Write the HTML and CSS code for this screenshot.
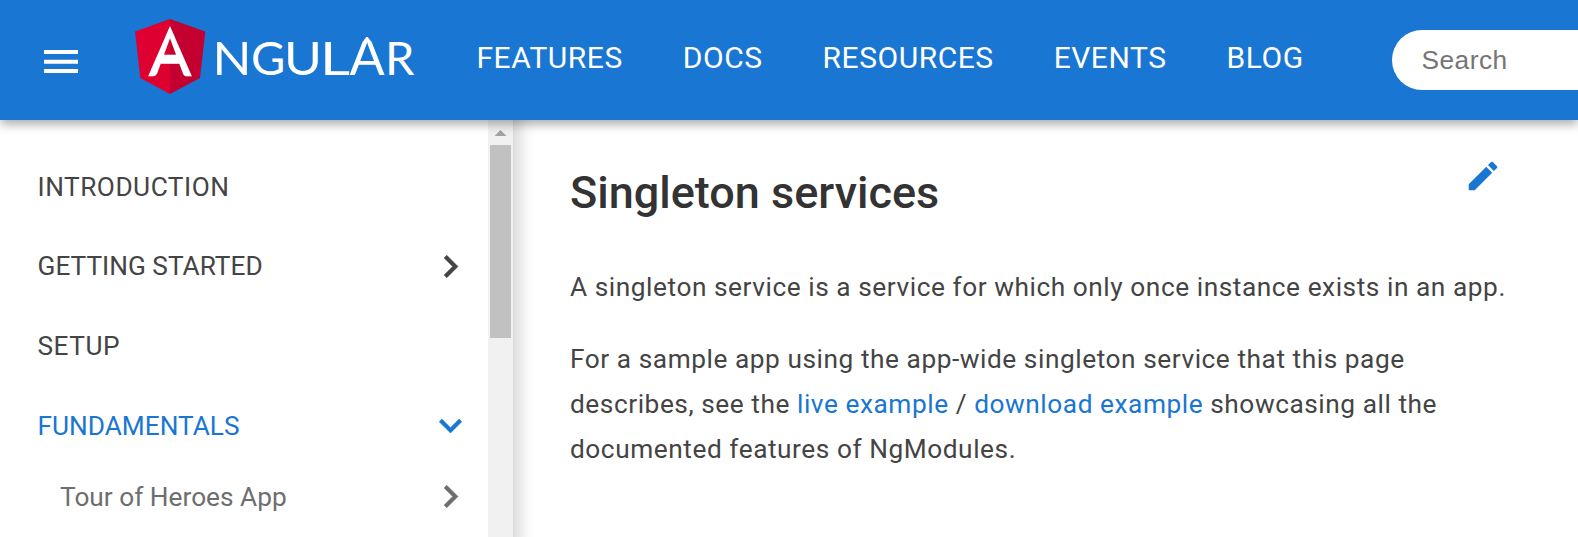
FILE: index.html
```html
<!DOCTYPE html>
<html lang="en">
<head>
<meta charset="utf-8">
<title>Angular - Singleton services</title>
<link rel="stylesheet" href="styles.css">
</head>
<body>
<header class="toolbar">
  <button class="menu-button" aria-label="Docs menu">
    <svg class="menu-icon" viewBox="0 0 34 24"><path d="M0 0h34v4H0zM0 9.8h34v4H0zM0 19h34v4H0z"/></svg>
  </button>
  <a class="logo" aria-label="Angular">
    <svg width="284" height="80" viewBox="0 0 284 80">
      <path class="shield-left" d="M35 2L0 14.500l5.300 46.500L35 77z"/>
      <path class="shield-right" d="M35 2l35.300 12.500L65 61 35 77z"/>
      <text class="mark" x="11" y="57.700" textLength="48" lengthAdjust="spacingAndGlyphs">A</text>
      <path class="shield-left" d="M35 9L12.800 60H8L24 7 35 4z"/>
      <path class="shield-right" d="M35 9L57.200 60H62L46 7 35 4z"/>
      <text class="wordmark" x="77.500" y="57.500" textLength="39" lengthAdjust="spacingAndGlyphs">N</text>
      <text class="wordmark" x="116" y="57.500">G</text>
      <text class="wordmark" x="149" y="57.500" textLength="38" lengthAdjust="spacingAndGlyphs">U</text>
      <text class="wordmark" x="185" y="57.500" textLength="30" lengthAdjust="spacingAndGlyphs">L</text>
      <text class="wordmark tall" x="214.500" y="57.500">A</text>
      <path class="bevel" d="M232 19l-4.500 6V18zM232 19l4.500 6V18z"/>
      <text class="wordmark" x="250" y="57.500">R</text>
    </svg>
  </a>
  <nav class="nav">
    <a>FEATURES</a><a>DOCS</a><a>RESOURCES</a><a>EVENTS</a><a>BLOG</a>
  </nav>
  <div class="search">Search</div>
</header>
<div class="layout">
  <aside class="sidenav">
    <div class="menu">
      <a class="item leaf">INTRODUCTION</a>
      <a class="item">GETTING STARTED<svg class="chevron" viewBox="0 0 24 24"><path d="M10 6L8.590 7.410 13.170 12l-4.580 4.590L10 18l6-6z"/></svg></a>
      <a class="item leaf">SETUP</a>
      <a class="item selected">FUNDAMENTALS<svg class="chevron open" viewBox="0 0 24 24"><path d="M10 6L8.590 7.410 13.170 12l-4.580 4.590L10 18l6-6z"/></svg></a>
      <a class="item child">Tour of Heroes App<svg class="chevron" viewBox="0 0 24 24"><path d="M10 6L8.590 7.410 13.170 12l-4.580 4.590L10 18l6-6z"/></svg></a>
    </div>
    <div class="scrollbar"><div class="arrow"></div><div class="thumb"></div></div>
  </aside>
  <main class="content">
    <div class="heading">
      <h1>Singleton services</h1>
      <svg class="edit" viewBox="0 0 24 24"><path d="M3 17.250V21h3.750L17.810 9.940l-3.750-3.750L3 17.250zM20.710 7.040c.39-.39.39-1.020 0-1.410l-2.340-2.340c-.39-.39-1.020-.39-1.410 0l-1.830 1.830 3.750 3.750 1.830-1.830z"/></svg>
    </div>
    <p>A singleton service is a service for which only once instance exists in an app.</p>
    <p>For a sample app using the app-wide singleton service that this page<br>describes, see the <a>live example</a> / <a>download example</a> showcasing all the<br>documented features of NgModules.</p>
  </main>
</div>
</body>
</html>
```
FILE: styles.css
```css
* { box-sizing: border-box; }
body {
  margin: 0;
  height: 537px;
  overflow: hidden;
  display: flex;
  flex-direction: column;
  background: #fff;
  font-family: Roboto, sans-serif;
  color: #444;
}
.toolbar {
  position: relative;
  z-index: 2;
  flex: none;
  height: 120px;
  display: flex;
  background: #1976d2;
  box-shadow: 0 4px 10px rgba(0, 0, 0, .34);
}
.menu-button {
  width: 135px;
  padding: 50px 0 0 43.500px;
  border: 0;
  background: none;
  display: flex;
  align-items: flex-start;
}
.menu-icon { width: 34px; height: 24px; fill: #fff; }
.logo { width: 341.500px; padding-top: 17px; }
.logo svg { display: block; overflow: visible; }
.shield-left { fill: #dd0031; }
.shield-right { fill: #c3002f; }
.mark {
  font: 700 68px Lato, sans-serif;
  fill: #fff;
  stroke: #fff;
  stroke-width: 2.600px;
}
.wordmark { font: 400 47px Lato, sans-serif; fill: #fff; }
.tall { font-size: 52px; }
.bevel { fill: #1976d2; }
.nav {
  width: 915.500px;
  display: flex;
  gap: 60px;
  font-size: 30px;
  letter-spacing: .53px;
  line-height: 115px;
  color: #fff;
  white-space: nowrap;
}
.search {
  flex: 1;
  height: 60px;
  margin-top: 30px;
  padding-left: 29.500px;
  border-radius: 30px 0 0 30px;
  background: #fff;
  color: #757575;
  font: 26.25px/60px "Liberation Sans", sans-serif;
  letter-spacing: .5px;
}
.layout { flex: 1; min-height: 0; display: flex; }
.sidenav {
  width: 514px;
  display: flex;
  box-shadow: -5px 0 14px 12px rgba(0, 0, 0, .15);
}
.menu { flex: 1; min-height: 0; padding-top: 27px; }
.item {
  height: 79.600px;
  padding: 0 15px 0 37.500px;
  display: flex;
  align-items: center;
  justify-content: space-between;
  font-size: 26.25px;
}
.leaf { letter-spacing: .5px; }
.child { height: 63px; padding-left: 60px; color: #6e6e6e; }
.selected { color: #1976d2; }
.chevron {
  width: 45px;
  height: 45px;
  fill: currentColor;
  stroke: currentColor;
  stroke-width: .3;
}
.open { transform: rotate(90deg); }
.scrollbar {
  width: 26px;
  padding: 10px 2px 0;
  background: #f1f1f1;
  border-right: 1px solid #ddd;
}
.arrow {
  width: 12px;
  height: 6px;
  margin: 0 auto 9px;
  background: #a3a3a3;
  clip-path: polygon(50% 0, 100% 100%, 0 100%);
}
.thumb { height: 193px; background: #c1c1c1; }
.content { flex: 1; padding: 37px 0 0 56px; }
.heading {
  height: 94px;
  padding-right: 76px;
  display: flex;
  justify-content: space-between;
}
h1 {
  margin: 0;
  padding-top: 6px;
  font-size: 45px;
  font-weight: 500;
  line-height: 60px;
  color: #333;
}
.edit { width: 38px; height: 38px; fill: #1976d2; }
p {
  margin: 14px 0 27px;
  font-size: 26.25px;
  line-height: 45px;
  letter-spacing: .55px;
  white-space: nowrap;
}
p a { color: #1976d2; }
```
